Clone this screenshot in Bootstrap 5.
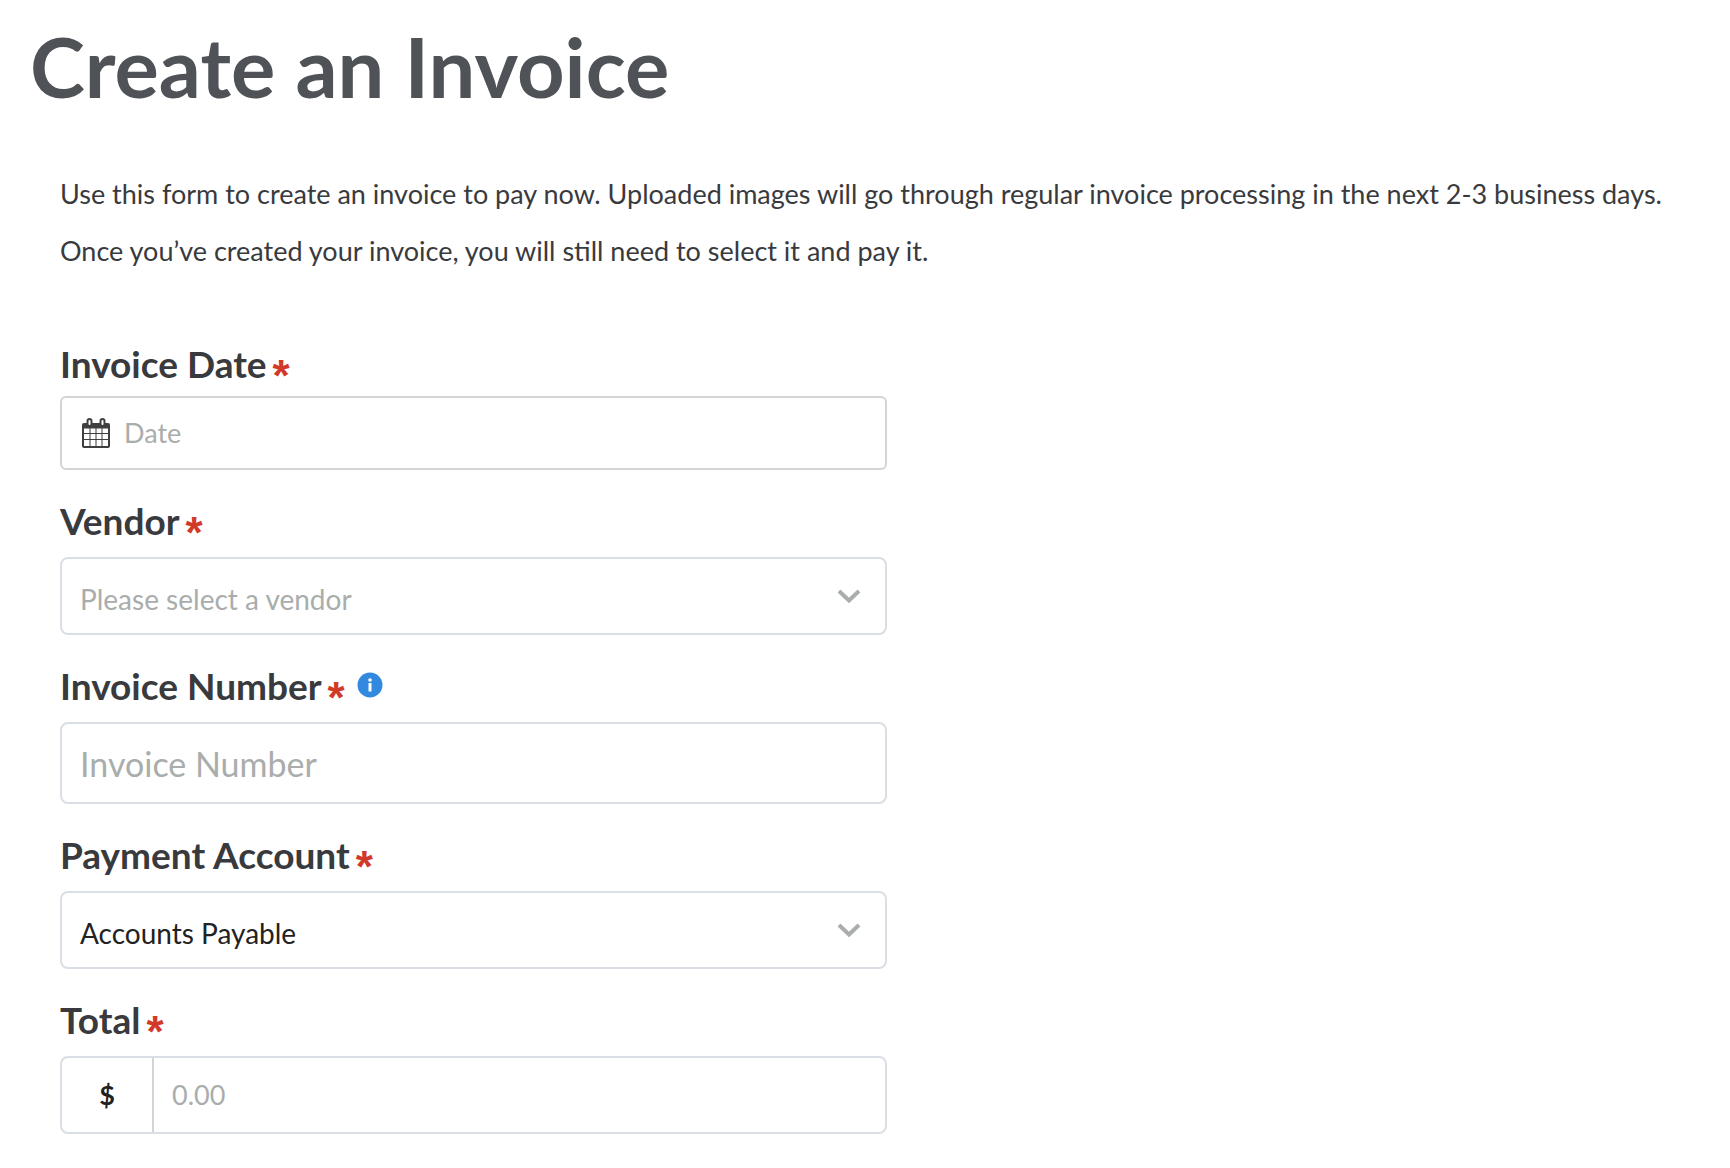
<!DOCTYPE html>
<html lang="en">
<head>
<meta charset="utf-8">
<meta name="viewport" content="width=device-width, initial-scale=1">
<title>Create an Invoice</title>
<link href="https://cdn.jsdelivr.net/npm/bootstrap@5.3.0/dist/css/bootstrap.min.css" rel="stylesheet">
<style>
  body { font-family: Lato, "Open Sans", sans-serif; color: #393a3d; background: #fff; }
  .page-title { font-size: 83px; line-height: 96px; font-weight: 700; color: #4f5357; padding: 18px 30px 0; margin: 0; }
  .invoice-body { padding: 51px 16px 32px 60px; }
  .intro { font-size: 27px; line-height: 57px; margin-bottom: 63px; }
  .intro p { margin: 0; }
  .field { margin-bottom: 29px; }
  .field-label { font-size: 37px; line-height: 44px; font-weight: 700; margin-bottom: 14px; }
  .field-label-tight { margin-bottom: 10px; }
  .req { font-family: "Liberation Sans", Arial, sans-serif; font-size: 44px; line-height: 44px; height: 32px; color: #d13a28; margin-left: 6px; }
  .info-btn { border: 0; background: none; padding: 0; margin-left: 12px; line-height: 0; }
  .control { border: 2px solid #dadfe5; border-radius: 8px; background-color: #fff; color: #222; font-size: 27px; line-height: 40px; height: 78px; padding: 4px 18px 0; box-shadow: none; }
  .control::placeholder, .control input::placeholder { color: #a9adac; opacity: 1; }
  .control-date { border-color: #d4d4d6; border-radius: 6px; height: 74px; padding: 0 19px; gap: 13px; }
  .control input { border: 0; background: none; padding: 0; color: inherit; outline: 0; min-width: 0; }
  .control-select { appearance: none; font-size: 28px; padding-top: 6px; background-repeat: no-repeat; background-position: right 24px center; background-size: 24px 18px;
    background-image: url("data:image/svg+xml,%3Csvg xmlns='http://www.w3.org/2000/svg' viewBox='0 0 24 18'%3E%3Cpath d='M2 4l10 9.500L22 4' fill='none' stroke='%23a9adac' stroke-width='4'/%3E%3C/svg%3E"); }
  .control-select.is-empty { color: #a9adac; }
  .control-large { font-size: 34px; height: 82px; padding-top: 0; }
  .control-money { padding: 0; }
  .currency { width: 92px; border-right: 2px solid #d4d4d6; color: #222; font-weight: 700; }
  .control-money input { padding: 0 18px; }
</style>
</head>
<body>
<main>
  <h1 class="page-title">Create an Invoice</h1>
  <div class="invoice-body">
    <div class="intro">
      <p>Use this form to create an invoice to pay now. Uploaded images will go through regular invoice processing in the next 2-3 business days.</p>
      <p>Once you’ve created your invoice, you will still need to select it and pay it.</p>
    </div>
    <form class="w-50">
      <div class="field">
        <label class="field-label field-label-tight d-flex align-items-start" for="invoice-date">Invoice Date<span class="req align-self-end">*</span></label>
        <div class="control control-date d-flex align-items-center">
          <svg width="30" height="32" viewBox="0 0 30 32" aria-hidden="true">
            <path d="M3 6h24a2 2 0 0 1 2 2v21a2 2 0 0 1-2 2H3a2 2 0 0 1-2-2V8a2 2 0 0 1 2-2z" fill="#404042"/>
            <path d="M3 11.500h5.500v4.500H3zM9.500 11.500h5v4.500h-5zM15.500 11.500h5v4.500h-5zM21.500 11.500H27v4.500h-5.500zM3 17h5.500v5H3zM9.500 17h5v5h-5zM15.500 17h5v5h-5zM21.500 17H27v5h-5.500zM3 23h5.500v6H3zM9.500 23h5v6h-5zM15.500 23h5v6h-5zM21.500 23H27v6h-5.500z" fill="#fff"/>
            <rect x="6.500" y="2" width="4" height="7" rx="2" fill="#fff" stroke="#404042" stroke-width="2"/>
            <rect x="19.500" y="2" width="4" height="7" rx="2" fill="#fff" stroke="#404042" stroke-width="2"/>
          </svg>
          <input class="flex-grow-1" type="text" id="invoice-date" placeholder="Date">
        </div>
      </div>
      <div class="field">
        <label class="field-label d-flex align-items-start" for="vendor">Vendor<span class="req align-self-end">*</span></label>
        <select class="control control-select is-empty w-100 d-block" id="vendor"><option>Please select a vendor</option></select>
      </div>
      <div class="field">
        <div class="d-flex align-items-start">
          <label class="field-label d-flex align-items-start" for="invoice-number">Invoice Number<span class="req align-self-end">*</span></label>
          <button class="info-btn mt-2" type="button" aria-label="About the invoice number">
            <svg width="26" height="26" viewBox="0 0 26 26" aria-hidden="true"><circle cx="13" cy="13" r="12.500" fill="#3389e0"/><circle cx="13" cy="8" r="1.800" fill="#fff"/><path d="M11.500 11h3v8.500h-3z" fill="#fff"/></svg>
          </button>
        </div>
        <input class="control control-large w-100 d-block" type="text" id="invoice-number" placeholder="Invoice Number">
      </div>
      <div class="field">
        <label class="field-label d-flex align-items-start" for="account">Payment Account<span class="req align-self-end">*</span></label>
        <select class="control control-select w-100 d-block" id="account"><option>Accounts Payable</option></select>
      </div>
      <div class="field mb-0">
        <label class="field-label d-flex align-items-start" for="total">Total<span class="req align-self-end">*</span></label>
        <div class="control control-money d-flex align-items-stretch">
          <span class="currency d-flex align-items-center justify-content-center">$</span>
          <input class="flex-grow-1" type="text" id="total" placeholder="0.00">
        </div>
      </div>
    </form>
  </div>
</main>
<script src="https://cdn.jsdelivr.net/npm/bootstrap@5.3.0/dist/js/bootstrap.bundle.min.js"></script>
</body>
</html>
